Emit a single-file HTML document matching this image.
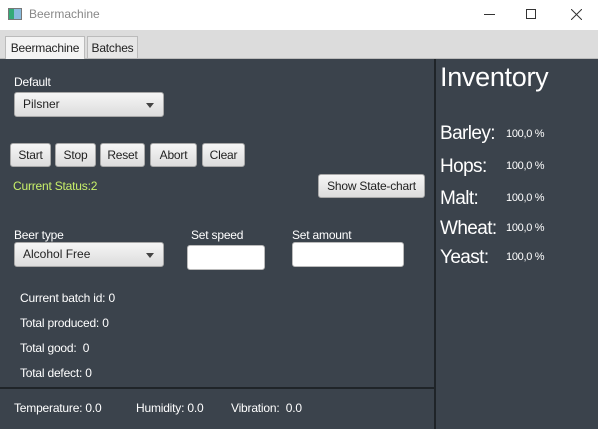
<!DOCTYPE html>
<html><head><style>
*{margin:0;padding:0;box-sizing:border-box}
body{width:598px;height:429px;overflow:hidden;background:#3b434c;font-family:"Liberation Sans",sans-serif;position:relative}
.a{position:absolute;white-space:nowrap}
.w{color:#fff;font-size:12px;letter-spacing:-0.2px}
.btn{position:absolute;height:24px;border:1px solid #a8a8a8;border-radius:3px;background:linear-gradient(#f6f6f6,#dcdcdc);font-size:12px;color:#222;text-align:center;line-height:22px;letter-spacing:-0.2px}
.combo{position:absolute;height:25px;border:1px solid #a8a8a8;border-radius:3px;background:linear-gradient(#f6f6f6,#dcdcdc);font-size:12px;color:#222;line-height:23px;padding-left:8px}
.combo:after{content:"";position:absolute;right:9px;top:10px;border-left:4px solid transparent;border-right:4px solid transparent;border-top:5px solid #444}
.inp{position:absolute;background:#fff;border:1px solid #bbb;border-radius:3px}
.inv{position:absolute;left:440px;color:#fff;font-size:19px;letter-spacing:-0.6px}
.pct{position:absolute;left:506px;color:#fff;font-size:11px;letter-spacing:-0.3px}
</style></head><body>
<div class="a" style="left:0;top:0;width:598px;height:30px;background:#fff"></div>
<div class="a" style="left:8px;top:8px;width:14px;height:12px;border:1px solid #777;background:linear-gradient(90deg,#3a7 0 40%,#8bd 40%)"></div>
<div class="a" style="left:29px;top:7px;font-size:12px;color:#888">Beermachine</div>
<div class="a" style="left:484px;top:14px;width:11px;height:1px;background:#333"></div>
<div class="a" style="left:526px;top:9px;width:10px;height:10px;border:1px solid #333"></div>
<svg class="a" style="left:571px;top:9px" width="11" height="11"><path d="M0 0L11 11M11 0L0 11" stroke="#333" stroke-width="1"/></svg>
<div class="a" style="left:0;top:30px;width:598px;height:29px;background:#dcdcdc;border-bottom:1px solid #bbb"></div>
<div class="a" style="left:5px;top:36px;width:80px;height:23px;background:#f4f4f4;border:1px solid #bbb;border-bottom:none;font-size:12px;line-height:22px;text-align:center;color:#222;letter-spacing:-0.2px">Beermachine</div>
<div class="a" style="left:87px;top:36px;width:51px;height:22px;background:#e6e6e6;border:1px solid #bbb;border-bottom:none;font-size:12px;line-height:22px;text-align:center;color:#222;letter-spacing:-0.2px">Batches</div>
<div class="a" style="left:434px;top:59px;width:2px;height:370px;background:#1f2428"></div>
<div class="a" style="left:0;top:387px;width:434px;height:2px;background:#1f2428"></div>
<div class="a w" style="left:14px;top:75px">Default</div>
<div class="combo" style="left:14px;top:92px;width:150px">Pilsner</div>
<div class="btn" style="left:10px;top:143px;width:41px">Start</div>
<div class="btn" style="left:55px;top:143px;width:41px">Stop</div>
<div class="btn" style="left:100px;top:143px;width:45px">Reset</div>
<div class="btn" style="left:150px;top:143px;width:47px">Abort</div>
<div class="btn" style="left:202px;top:143px;width:43px">Clear</div>
<div class="a" style="left:13px;top:179px;font-size:12px;color:#c8f06a;letter-spacing:-0.2px">Current Status:2</div>
<div class="btn" style="left:318px;top:174px;width:107px">Show State-chart</div>
<div class="a w" style="left:14px;top:228px">Beer type</div>
<div class="combo" style="left:14px;top:242px;width:150px">Alcohol Free</div>
<div class="a w" style="left:191px;top:228px">Set speed</div>
<div class="inp" style="left:187px;top:245px;width:78px;height:25px"></div>
<div class="a w" style="left:292px;top:228px">Set amount</div>
<div class="inp" style="left:292px;top:242px;width:112px;height:25px"></div>
<div class="a w" style="left:20px;top:291px">Current batch id: 0</div>
<div class="a w" style="left:20px;top:316px">Total produced: 0</div>
<div class="a w" style="left:20px;top:341px">Total good:&nbsp; 0</div>
<div class="a w" style="left:20px;top:366px">Total defect: 0</div>
<div class="a w" style="left:14px;top:401px">Temperature: 0.0</div>
<div class="a w" style="left:136px;top:401px">Humidity: 0.0</div>
<div class="a w" style="left:231px;top:401px">Vibration:&nbsp; 0.0</div>
<div class="inv" style="top:62px;font-size:27px;letter-spacing:-0.3px">Inventory</div>
<div class="inv" style="top:123px">Barley:</div><div class="pct" style="top:128px">100,0 %</div>
<div class="inv" style="top:156px">Hops:</div><div class="pct" style="top:160px">100,0 %</div>
<div class="inv" style="top:188px">Malt:</div><div class="pct" style="top:192px">100,0 %</div>
<div class="inv" style="top:218px">Wheat:</div><div class="pct" style="top:222px">100,0 %</div>
<div class="inv" style="top:247px">Yeast:</div><div class="pct" style="top:251px">100,0 %</div>
</body></html>
